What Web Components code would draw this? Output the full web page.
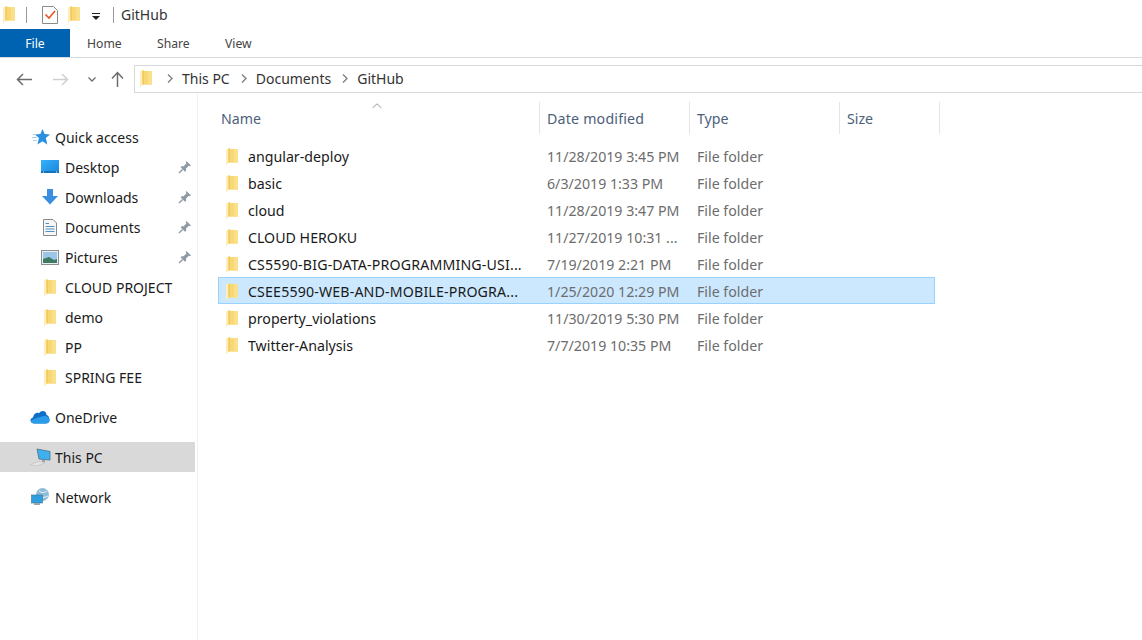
<!DOCTYPE html>
<html>
<head>
<meta charset="utf-8">
<style>
  html, body { margin: 0; height: 640px; overflow: hidden; background: #fff; }
  body { font-family: "Noto Sans", "Open Sans", sans-serif; font-size: 14px; color: #1a1a1a; }
  #app { display: flex; flex-direction: column; height: 640px; }
  #main { display: flex; flex: 1; min-height: 0; }
</style>
</head>
<body>
<div id="app">
  <title-bar title="GitHub"></title-bar>
  <ribbon-tabs></ribbon-tabs>
  <address-bar></address-bar>
  <div id="main">
    <nav-pane></nav-pane>
    <file-list></file-list>
  </div>
</div>

<script>
const folderSvg = () => `
  <svg width="12" height="17" viewBox="0 0 12 17" style="display:block">
    <path d="M0 2 L3 0 L5 1 L12 1 L12 14.5 L3 14.5 L0 17 Z" fill="#ffe9a2"/>
    <path d="M3 1 H12 V14.5 H3 Z" fill="#f8d775"/>
    <path d="M8 1 H12 V14.5 H8 Z" fill="#fbe08c"/>
    <path d="M0 2 L2.5 .5 V14.5 L0 17 Z" fill="#ffeeb8"/>
    <path d="M2.5 .5 H3.5 V14.5 H2.5 Z" fill="#eebc45"/>
  </svg>`;

const pinSvg = `
  <svg width="14" height="14" viewBox="0 0 14 14">
    <path d="M8.5 1 L13 5.5 L11.8 6.3 L10.8 5.8 L8 8.6 L8.2 10.8 L7 11.8 L2.6 7.2 L3.6 6.2 L5.6 6.2 L8.4 3.4 L7.8 2.2 Z" fill="#8f9aa6"/>
    <path d="M4.6 9.4 L1 13" stroke="#8f9aa6" stroke-width="1.4"/>
  </svg>`;

class TitleBar extends HTMLElement {
  constructor() {
    super();
    this.attachShadow({ mode: "open" });
  }

  connectedCallback() {
    this.shadowRoot.innerHTML = `
      <style>
        :host { display: flex; align-items: center; height: 29px; font-size: 14px; color: #333; }
        .first { margin-left: 3px; display: flex; }
        .sep { width: 1px; height: 16px; background: #9a9a9a; }
        .check { margin-left: 15px; display: flex; }
        .second { margin-left: 10px; display: flex; }
        .down { margin-left: 12px; margin-top: 3px; display: flex; }
        .title { margin-left: 7px; }
      </style>
      <span class="first">${folderSvg()}</span>
      <span class="sep" style="margin-left:11px"></span>
      <span class="check">
        <svg width="16" height="18" viewBox="0 0 16 18">
          <path d="M.5.5 H11.5 L15.5 4.5 V17.5 H.5 Z" fill="#fdfdfd" stroke="#8a8a8a"/>
          <path d="M3.5 8.5 L7 12 L13 5" fill="none" stroke="#e8561f" stroke-width="1.6"/>
        </svg>
      </span>
      <span class="second">${folderSvg()}</span>
      <span class="down">
        <svg width="8" height="7" viewBox="0 0 8 7">
          <rect x="0" y="0" width="8" height="1" fill="#222"/>
          <path d="M0 3 H8 L4 7 Z" fill="#222"/>
        </svg>
      </span>
      <span class="sep" style="margin-left:13px"></span>
      <span class="title">${this.getAttribute("title")}</span>`;
  }
}

class RibbonTabs extends HTMLElement {
  constructor() {
    super();
    this.attachShadow({ mode: "open" });
  }

  connectedCallback() {
    this.shadowRoot.innerHTML = `
      <style>
        :host { display: flex; height: 28px; border-bottom: 1px solid #dadbdc; font-size: 12.2px; color: #444; }
        div { display: flex; align-items: center; }
        .file { width: 70px; background: #0063b1; color: #fff; justify-content: center; }
        .home { margin-left: 17px; width: 70px; }
        .share { width: 68px; }
      </style>
      <div class="file">File</div>
      <div class="home">Home</div>
      <div class="share">Share</div>
      <div>View</div>`;
  }
}

class AddressBar extends HTMLElement {
  constructor() {
    super();
    this.attachShadow({ mode: "open" });
  }

  connectedCallback() {
    const chevron = `<svg width="6" height="9" viewBox="0 0 6 9"><path d="M1 .5 L5 4.5 L1 8.5" fill="none" stroke="#7d7d7d" stroke-width="1.3"/></svg>`;
    this.shadowRoot.innerHTML = `
      <style>
        :host { display: flex; align-items: center; height: 35px; padding-top: 7px; box-sizing: border-box; }
        .nav { display: flex; align-items: center; width: 134px; flex: none; }
        .box { flex: 1; height: 28px; box-sizing: border-box; padding-bottom: 2px; border: 1px solid #d9d9d9; border-right: none; display: flex; align-items: center; font-size: 14px; color: #333; }
        .box span { white-space: nowrap; }
        svg { display: block; flex: none; }
      </style>
      <div class="nav">
        <svg style="margin-left:16px" width="16" height="13" viewBox="0 0 16 13"><path d="M16 6.5 H2 M7 1 L1.5 6.5 L7 12" fill="none" stroke="#6d6d6d" stroke-width="1.5"/></svg>
        <svg style="margin-left:21px" width="16" height="13" viewBox="0 0 16 13"><path d="M0 6.5 H14 M9 1 L14.5 6.5 L9 12" fill="none" stroke="#cfcfcf" stroke-width="1.5"/></svg>
        <svg style="margin-left:19px" width="8" height="5" viewBox="0 0 8 5"><path d="M.5 .5 L4 4 L7.5 .5" fill="none" stroke="#6d6d6d" stroke-width="1.3"/></svg>
        <svg style="margin-left:15px" width="13" height="16" viewBox="0 0 13 16"><path d="M6.5 16 V2 M1 7.5 L6.5 1.5 L12 7.5" fill="none" stroke="#6d6d6d" stroke-width="1.5"/></svg>
      </div>
      <div class="box">
        <span style="margin-left:5px;display:flex">${folderSvg()}</span>
        <span style="margin-left:15px;display:flex">${chevron}</span>
        <span style="margin-left:9px">This PC</span>
        <span style="margin-left:11px;display:flex">${chevron}</span>
        <span style="margin-left:9px">Documents</span>
        <span style="margin-left:11px;display:flex">${chevron}</span>
        <span style="margin-left:9px">GitHub</span>
      </div>`;
  }
}

class NavItem extends HTMLElement {
  constructor() {
    super();
    this.attachShadow({ mode: "open" });
  }

  connectedCallback() {
    const indent = this.getAttribute("indent") || "30";
    const textLeft = this.getAttribute("text-left") || "65";
    this.shadowRoot.innerHTML = `
      <style>
        :host { display: flex; align-items: center; height: 30px; white-space: nowrap; font-size: 14px; color: #1a1a1a; }
        :host([selected]) { background: #d9d9d9; }
        .icon { width: ${textLeft - indent}px; padding-left: ${indent}px; display: flex; flex: none; }
        .label { flex: 1; }
        .pin { width: 14px; margin-right: 3px; display: flex; }
      </style>
      <span class="icon"><slot name="icon"></slot></span>
      <span class="label"><slot></slot></span>
      ${this.hasAttribute("pinned") ? `<span class="pin">${pinSvg}</span>` : ""}`;
  }
}

class NavPane extends HTMLElement {
  constructor() {
    super();
    this.attachShadow({ mode: "open" });
  }

  connectedCallback() {
    this.shadowRoot.innerHTML = `
      <style>
        :host { display: block; width: 198px; flex: none; box-sizing: border-box; padding: 29px 2px 0 0; border-right: 1px solid #f2f2f2; }
        .gap { height: 10px; }
        svg { display: block; }
      </style>
      <nav-item indent="32" text-left="55">
        <svg slot="icon" width="18" height="16" viewBox="0 0 18 16"><path d="M10.5 0 L12.6 5 L18 5.4 L13.8 9 L15.3 15.5 L10.5 12.3 L5.4 15.5 L7 9 L3 5.6 L8.4 5 Z" fill="#2a8fe0"/><path d="M1 5.5 H4 M0 8.5 H5 M1 11.5 H5" stroke="#a5d0f0"/></svg>
        Quick access
      </nav-item>
      <nav-item indent="41" text-left="65" pinned>
        <svg slot="icon" width="18" height="14" viewBox="0 0 18 14">
          <defs><linearGradient id="dk" x1="0" x2="1" y1="0" y2="1"><stop offset="0" stop-color="#35b0f8"/><stop offset="1" stop-color="#1a86dc"/></linearGradient></defs>
          <rect width="18" height="13" fill="url(#dk)"/><rect y="11" width="18" height="2" fill="#1473bd"/><path d="M2 12 H3 M15 12 H16" stroke="#e6f4ff"/>
        </svg>
        Desktop
      </nav-item>
      <nav-item indent="42" text-left="65" pinned>
        <svg slot="icon" width="16" height="16" viewBox="0 0 16 16"><path d="M5 0 H11 V7 H16 L8 15.5 L0 7 H5 Z" fill="#3b8fe0"/></svg>
        Downloads
      </nav-item>
      <nav-item indent="43" text-left="65" pinned>
        <svg slot="icon" width="14" height="17" viewBox="0 0 14 17"><path d="M.5 .5 H10 L13.5 4 V16.5 H.5 Z" fill="#f6f6f6" stroke="#8a8a8a"/><path d="M2.5 4.5 H6 M2.5 7.5 H11.5 M2.5 10 H11.5 M2.5 12.5 H11.5" stroke="#4f8fc4"/></svg>
        Documents
      </nav-item>
      <nav-item indent="41" text-left="65" pinned>
        <svg slot="icon" width="18" height="15" viewBox="0 0 18 15"><rect x=".5" y=".5" width="17" height="14" fill="#e9eef2" stroke="#8a8f94"/><rect x="2" y="2" width="14" height="11" fill="#9cc6e8"/><path d="M2 13 V9 L8 7 L13 10 L16 9 V13 Z" fill="#3c7a62"/></svg>
        Pictures
      </nav-item>
      <nav-item indent="44" text-left="65"><span slot="icon">${folderSvg()}</span>CLOUD PROJECT</nav-item>
      <nav-item indent="44" text-left="65"><span slot="icon">${folderSvg()}</span>demo</nav-item>
      <nav-item indent="44" text-left="65"><span slot="icon">${folderSvg()}</span>PP</nav-item>
      <nav-item indent="44" text-left="65"><span slot="icon">${folderSvg()}</span>SPRING FEE</nav-item>
      <div class="gap"></div>
      <nav-item indent="30" text-left="55">
        <svg slot="icon" width="20" height="14" viewBox="0 0 20 14"><path d="M4 13.5 C0 13.5 -1 8.5 3 7.5 C3.5 3.5 7 2 9 3.2 C11.5 -.5 16.5 .5 16.5 5 C20 5.5 21 13.5 16 13.5 Z" fill="#0f6fc6"/><path d="M4 13.5 C1.5 13.5 .5 11.5 1.5 10 L8 7.5 L14 6 C17 5.5 20.5 8 19.5 11 C19 12.8 17.5 13.5 16 13.5 Z" fill="#2a9cea"/></svg>
        OneDrive
      </nav-item>
      <div class="gap"></div>
      <nav-item indent="30" text-left="55" selected>
        <svg slot="icon" width="21" height="18" viewBox="0 0 21 18"><path d="M7 1 L20 3.5 V12 L9 11 Z" fill="#3fb0ee" stroke="#4a6f88" stroke-width=".8"/><path d="M12 12 L15 12.5 V14 L12 13.5 Z" fill="#8a959c"/><path d="M0 16.5 L9 13.5 L15 15 L6 18 Z" fill="#e4e4e4" stroke="#bdbdbd" stroke-width=".6"/></svg>
        This PC
      </nav-item>
      <div class="gap"></div>
      <nav-item indent="31" text-left="55">
        <svg slot="icon" width="19" height="18" viewBox="0 0 19 18"><circle cx="11.5" cy="6.5" r="6.5" fill="#8fbcd8"/><path d="M8 3 C11 5 13 5 16 3 M7 8 C10 10 13 10 17 8" stroke="#e6f1f7" fill="none"/><rect x="0.5" y="7" width="11" height="8" fill="#2f9fe0" stroke="#40708f" stroke-width=".6"/><rect x="3" y="15" width="6" height="2" fill="#9aa6ae"/></svg>
        Network
      </nav-item>`;
  }
}

class FileRow extends HTMLElement {
  constructor() {
    super();
    this.attachShadow({ mode: "open" });
  }

  connectedCallback() {
    this.shadowRoot.innerHTML = `
      <style>
        :host { display: flex; align-items: center; height: 27px; box-sizing: border-box; width: 717px; border: 1px solid transparent; white-space: nowrap; font-size: 14.2px; color: #1a1a1a; }
        :host([selected]) { background: #cce8ff; border-color: #99d1ff; margin: -1px 0 1px; padding-top: 2px; }
        :host([wide]) .name { letter-spacing: .15px; }
        .ic { margin-left: 7px; width: 22px; display: flex; flex: none; }
        .name { width: 299px; flex: none; overflow: hidden; }
        .date { width: 150px; flex: none; color: #6d6d6d; }
        .type { color: #6d6d6d; }
      </style>
      <span class="ic">${folderSvg()}</span>
      <span class="name">${this.getAttribute("name")}</span>
      <span class="date">${this.getAttribute("date")}</span>
      <span class="type">File folder</span>`;
  }
}

class FileList extends HTMLElement {
  constructor() {
    super();
    this.attachShadow({ mode: "open" });
  }

  connectedCallback() {
    this.shadowRoot.innerHTML = `
      <style>
        :host { display: block; flex: 1; padding-left: 20px; position: relative; }
        .head { display: flex; height: 32px; margin-top: 9px; margin-bottom: 9px; font-size: 14.2px; color: #4c607a; }
        .head div { box-sizing: border-box; border-right: 1px solid #e5e5e5; padding-left: 3px; display: flex; align-items: center; white-space: nowrap; }
        .sort { position: absolute; left: 174px; top: 10px; }
      </style>
      <svg class="sort" width="10" height="6" viewBox="0 0 10 6"><path d="M.5 5 L5 .8 L9.5 5" fill="none" stroke="#9a9a9a"/></svg>
      <div class="head">
        <div style="width:322px">Name</div>
        <div style="width:150px;padding-left:7px;letter-spacing:.2px">Date modified</div>
        <div style="width:150px;padding-left:7px">Type</div>
        <div style="width:100px;padding-left:7px">Size</div>
      </div>
      <file-row name="angular-deploy" date="11/28/2019 3:45 PM"></file-row>
      <file-row name="basic" date="6/3/2019 1:33 PM"></file-row>
      <file-row name="cloud" date="11/28/2019 3:47 PM"></file-row>
      <file-row name="CLOUD HEROKU" date="11/27/2019 10:31 ..."></file-row>
      <file-row name="CS5590-BIG-DATA-PROGRAMMING-USI..." date="7/19/2019 2:21 PM" wide></file-row>
      <file-row name="CSEE5590-WEB-AND-MOBILE-PROGRA..." date="1/25/2020 12:29 PM" wide selected></file-row>
      <file-row name="property_violations" date="11/30/2019 5:30 PM"></file-row>
      <file-row name="Twitter-Analysis" date="7/7/2019 10:35 PM"></file-row>`;
  }
}

customElements.define("title-bar", TitleBar);
customElements.define("ribbon-tabs", RibbonTabs);
customElements.define("address-bar", AddressBar);
customElements.define("nav-item", NavItem);
customElements.define("nav-pane", NavPane);
customElements.define("file-row", FileRow);
customElements.define("file-list", FileList);
</script>
</body>
</html>
